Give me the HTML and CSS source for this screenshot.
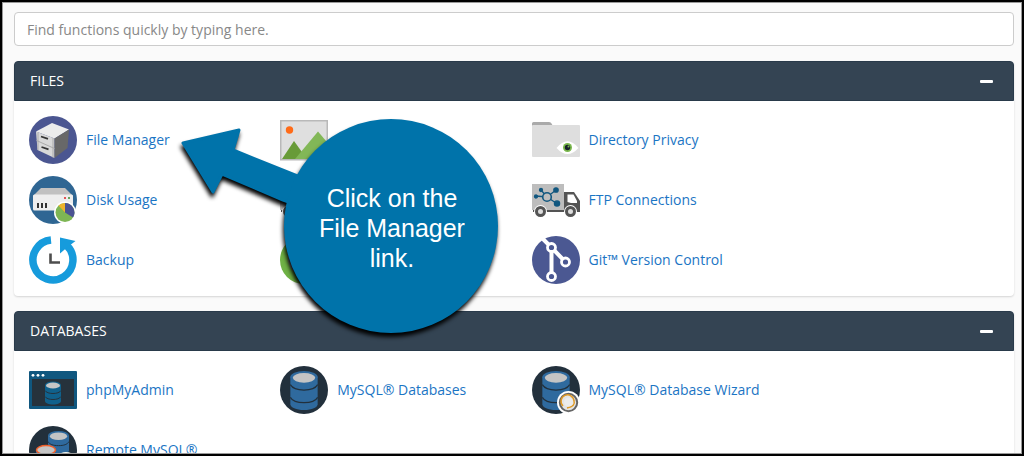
FILE: index.html
```
<!DOCTYPE html>
<html lang="en">
<head>
  <meta charset="UTF-8">
  <meta name="viewport" content="width=device-width, initial-scale=1.0">
  <title>Tools</title>
  <link rel="stylesheet" href="styles.css">
</head>
<body>
  <svg class="defs" aria-hidden="true">
    <defs>
      <symbol id="cylinder" viewBox="0 0 28 40">
        <path d="M0 6v28c0 3 6 6 14 6s14-3 14-6V6z" fill="#2f6a9e"/>
        <ellipse cx="14" cy="6" rx="14" ry="6" fill="#2f6a9e"/>
        <ellipse cx="14" cy="7" rx="11.5" ry="5" fill="#c4c4c4"/>
        <path d="M0 14c2 4 7 5.500 14 5.500S26 18 28 14M0 27c2 4 7 5.500 14 5.500S26 31 28 27" fill="none" stroke="#22303c" stroke-width="1.300"/>
      </symbol>
      <symbol id="truck" viewBox="0 0 48 48">
        <path d="M0 8h32v26H0z" fill="#bdbdbd"/>
        <path d="M32 16h10l6 9v11H32z" fill="#545454"/>
        <path d="M35.500 18.500h6l3.500 6.500v2h-6l-3.500-1z" fill="#fff"/>
        <path d="M1 34h46v2H1z" fill="#545454"/>
        <g stroke="#11577f" stroke-width="1.300" fill="#11577f">
          <path d="M15 21l-11-1M15 21l-6-7M15 21l9-7M15 21l9 6" fill="none"/>
          <circle cx="4" cy="20.5" r="1.5"/>
          <circle cx="9" cy="14" r="1.5"/>
          <circle cx="24" cy="14" r="2.2"/>
          <circle cx="25" cy="27.5" r="2.6"/>
          <circle cx="15" cy="21" r="4.3" fill="#bdbdbd" stroke-width="1.6"/>
        </g>
        <g fill="#ddd" stroke="#545454" stroke-width="3">
          <circle cx="8.5" cy="35.5" r="6.5" fill="#fff" stroke="none"/>
          <circle cx="38.5" cy="35.5" r="6.5" fill="#fff" stroke="none"/>
          <circle cx="8.5" cy="35.5" r="4"/>
          <circle cx="38.5" cy="35.5" r="4"/>
        </g>
      </symbol>
    </defs>
  </svg>

  <div class="frame">
    <main class="page">
      <input class="search" type="search" placeholder="Find functions quickly by typing here." aria-label="Find functions">

      <section class="panel">
        <div class="panel-header">
          <h2>FILES</h2>
          <button class="toggle" type="button" aria-label="Collapse files"><span></span></button>
        </div>
        <div class="items">
          <a class="item" href="#file-manager">
            <svg viewBox="0 0 48 48">
              <circle cx="24" cy="24" r="24" fill="#4b5691"/>
              <path d="M7 15.500L23 7l17 6.500-14.500 9z" fill="#ececec"/>
              <path d="M7 15.500l18.500 7V42L8.500 34z" fill="#d8d8d8"/>
              <path d="M25.500 22.500l14.500-9L38.500 32l-13 10z" fill="#686868"/>
              <path d="M7.500 24.500l18 8M24 22v19.500M9 16.500V34" fill="none" stroke="#aaa"/>
              <path d="M12 20.500l7 2.300M12.500 31l7 2.300" stroke="#333" stroke-width="1.800"/>
            </svg>
            <span>File Manager</span>
          </a>
          <a class="item" href="#images" aria-label="Images">
            <svg viewBox="0 0 48 48">
              <path d="M.75 4.750h46.500v39H.75z" fill="#dfdfdf" stroke="#b9b9b9" stroke-width="1.500"/>
              <circle cx="9.5" cy="14" r="3.7" fill="#ff6b18"/>
              <path d="M2 43l12-18 13 18z" fill="#689b38"/>
              <path d="M15 43l23-27.500 8.500 10V43z" fill="#82b757"/>
            </svg>
          </a>
          <a class="item" href="#directory-privacy">
            <svg viewBox="0 0 48 48">
              <path d="M0 10V7.500Q0 6 1.500 6H17q2 0 2.500 1.500L21 10z" fill="#aaa"/>
              <path d="M0 10q0-1 1-1h46q1 0 1 1v30q0 1-1 1H1q-1 0-1-1z" fill="#dedede"/>
              <path d="M24.500 32q11-13.500 22 0-11 12-22 0z" fill="#fff"/>
              <circle cx="35.5" cy="31.5" r="4.5" fill="#7ab84c"/>
              <circle cx="35.5" cy="31.5" r="2.7" fill="#17212b"/>
              <circle cx="36.5" cy="30.5" r="1" fill="#7ab84c"/>
            </svg>
            <span>Directory Privacy</span>
          </a>
          <a class="item" href="#disk-usage">
            <svg viewBox="0 0 48 48">
              <circle cx="24" cy="24" r="24" fill="#2f6693"/>
              <path d="M12 12h24l8 8H4z" fill="#c1c1c1"/>
              <path d="M4 20q0-1.500 1.500-1.500h37q1.500 0 1.500 1.500v13q0 1.500-1.500 1.500h-37Q4 34.500 4 33z" fill="#eee"/>
              <path d="M8 27h2v5H8zM12 27h2v5h-2zM16 27h2v5h-2z" fill="#333"/>
              <circle cx="36" cy="22" r="1" fill="#d22"/>
              <circle cx="40" cy="22" r="1" fill="#3a8b30"/>
              <circle cx="36" cy="36.5" r="11" fill="#fff"/>
              <circle cx="36" cy="36.5" r="9.5" fill="#7eb654"/>
              <path d="M36 36.500V27a9.500 9.500 0 0 1 8 14.500z" fill="#4a5292"/>
              <path d="M36 36.500l-6.500-7A9.500 9.500 0 0 1 36 27z" fill="#efb32b"/>
            </svg>
            <span>Disk Usage</span>
          </a>
          <a class="item" href="#ftp-accounts" aria-label="FTP Accounts">
            <svg><use href="#truck"/></svg>
          </a>
          <a class="item" href="#ftp-connections">
            <svg><use href="#truck"/></svg>
            <span>FTP Connections</span>
          </a>
          <a class="item" href="#backup">
            <svg viewBox="0 0 48 48">
              <path d="M22 4a20 20 0 1 0 15.500 5.200" fill="none" stroke="#169bdc" stroke-width="7.500"/>
              <path d="M31 1.500l15.500 3.500-8.500 6.500-7 6z" fill="#169bdc"/>
              <path d="M21.500 17.500v9H31" fill="none" stroke="#4d4d4d" stroke-width="2.600"/>
            </svg>
            <span>Backup</span>
          </a>
          <a class="item" href="#backup-wizard" aria-label="Backup Wizard">
            <svg viewBox="0 0 48 48">
              <circle cx="24" cy="24" r="24" fill="#6fb145"/>
              <circle cx="27" cy="22" r="18" fill="#e6e6e6" stroke="#888" stroke-width="2"/>
            </svg>
          </a>
          <a class="item" href="#git">
            <svg viewBox="0 0 48 48">
              <circle cx="24" cy="24" r="24" fill="#4b5892"/>
              <g fill="none" stroke="#fff">
                <path d="M10.500 2.500l9 9 14 14.500M19.500 11.500v29" stroke-width="4"/>
                <g fill="#4b5892" stroke-width="2.800">
                  <circle cx="19.5" cy="11.5" r="4"/>
                  <circle cx="33.5" cy="26" r="4"/>
                  <circle cx="19.5" cy="40.5" r="4"/>
                </g>
              </g>
            </svg>
            <span>Git™ Version Control</span>
          </a>
        </div>
      </section>

      <section class="panel">
        <div class="panel-header">
          <h2>DATABASES</h2>
          <button class="toggle" type="button" aria-label="Collapse databases"><span></span></button>
        </div>
        <div class="items">
          <a class="item" href="#phpmyadmin">
            <svg viewBox="0 0 48 48">
              <rect y="5" width="48" height="38" rx="1" fill="#10577f"/>
              <path d="M3 13h42v27H3z" fill="#26323c"/>
              <g fill="#fff">
                <circle cx="4" cy="9.3" r="1.4"/>
                <circle cx="9" cy="9.3" r="1.4"/>
                <circle cx="14" cy="9.3" r="1.4"/>
              </g>
              <path d="M16 19v16c0 2 3.500 3.500 8 3.500s8-1.500 8-3.500V19z" fill="#10618c"/>
              <ellipse cx="24" cy="19" rx="8" ry="3.5" fill="#10618c"/>
              <ellipse cx="24" cy="19.5" rx="7" ry="3" fill="#c6c6c6"/>
              <path d="M16 24.500c2 4 14 4 16 0M16 30.500c2 4 14 4 16 0" fill="none" stroke="#26323c"/>
            </svg>
            <span>phpMyAdmin</span>
          </a>
          <a class="item" href="#mysql-databases">
            <svg viewBox="0 0 48 48">
              <circle cx="24" cy="24" r="24" fill="#22303c"/>
              <use href="#cylinder" x="10" y="5" width="28" height="39"/>
            </svg>
            <span>MySQL® Databases</span>
          </a>
          <a class="item" href="#mysql-wizard">
            <svg viewBox="0 0 48 48">
              <circle cx="24" cy="24" r="24" fill="#22303c"/>
              <use href="#cylinder" x="10" y="5" width="28" height="39"/>
              <circle cx="36.5" cy="36.5" r="11.5" fill="#fff"/>
              <circle cx="36.5" cy="36.5" r="8.7" fill="#e4e4e4" stroke="#666" stroke-width="2"/>
              <path d="M31 40a6.500 6.500 0 1 1 11-5q2 5-7 7" fill="none" stroke="#e09a25" stroke-width="1.500"/>
              <circle cx="36.5" cy="36" r="4.5" fill="#ececec"/>
            </svg>
            <span>MySQL® Database Wizard</span>
          </a>
          <a class="item" href="#remote-mysql">
            <svg viewBox="0 0 48 48">
              <circle cx="24" cy="24" r="24" fill="#22303c"/>
              <use href="#cylinder" x="19" y="5" width="21" height="30"/>
              <path d="M7 24v16h20V24z" fill="#2f6a9e"/>
              <ellipse cx="17" cy="24" rx="9.5" ry="4.5" fill="#c6c6c6" stroke="#f0602b" stroke-width="1.5"/>
              <ellipse cx="37" cy="31" rx="8" ry="5" fill="#f3f6ec"/>
            </svg>
            <span>Remote MySQL®</span>
          </a>
        </div>
      </section>
    </main>
  </div>

  <div class="callout">
    <svg viewBox="180 115 320 226" aria-hidden="true">
      <path d="M183 143L239 130 233 150 300 177 300 206 283 200 222 174 213 192z" stroke="#0073aa" stroke-width="3" stroke-linejoin="round"/>
      <circle cx="391" cy="226" r="107"/>
    </svg>
    <p>Click on the<br>File Manager<br>link.</p>
  </div>
</body>
</html>
```
FILE: styles.css
```
* {
  box-sizing: border-box;
}
body {
  margin: 0;
  font-family: 'Open Sans', Arial, Helvetica, sans-serif;
  font-size: 14px;
  line-height: 20px;
}
.defs {
  position: absolute;
  width: 0;
  height: 0;
}
.frame {
  height: 100vh;
  border: 2px solid #000;
  overflow: hidden;
}
.page {
  height: 100%;
  padding: 9px 7px 0 11px;
  border: 1px solid #999;
  background: #fafafa;
  overflow: hidden;
}
.search {
  display: block;
  width: 100%;
  height: 34px;
  padding: 0 12px;
  border: 1px solid #ccc;
  border-radius: 4px;
  background: #fff;
  font: inherit;
  appearance: none;
}
.search::placeholder {
  color: #888;
  opacity: 1;
}
.panel {
  margin-top: 15px;
  border-radius: 4px;
  background: #fff;
  box-shadow: 0 1px 2px rgba(0, 0, 0, 0.15);
}
.panel-header {
  display: flex;
  align-items: center;
  justify-content: space-between;
  height: 40px;
  padding: 0 15px;
  border: 1px solid #293a4a;
  border-radius: 4px 4px 0 0;
  background: #344453;
  color: #fff;
}
h2 {
  margin: 0;
  font-size: 14px;
  font-weight: 400;
}
.toggle {
  padding: 8px 5px;
  border: 0;
  background: none;
}
.toggle span {
  display: block;
  width: 13px;
  height: 3px;
  border-radius: 1px;
  background: #fff;
}
.items {
  display: grid;
  grid-template-columns: repeat(4, minmax(0, 1fr));
  column-gap: 20px;
  padding: 9px 0 6px 15px;
}
.item {
  display: flex;
  align-items: center;
  gap: 9px;
  height: 60px;
  color: #1b75c4;
  text-decoration: none;
}
.item svg {
  flex: none;
  width: 48px;
  height: 48px;
}
.item:nth-child(3n + 1) {
  grid-column: 1;
}
.callout {
  position: absolute;
  top: 115px;
  left: 180px;
  display: grid;
  align-items: center;
  width: 320px;
  height: 226px;
  color: #fff;
  font: 25px/30px 'Liberation Sans', Arial, sans-serif;
  text-align: center;
}
.callout svg,
.callout p {
  grid-area: 1 / 1;
}
.callout svg {
  width: 320px;
  height: 226px;
  overflow: visible;
  fill: #0073aa;
  filter: drop-shadow(-1px 4px 2px #000);
}
.callout p {
  z-index: 1;
  justify-self: end;
  width: 216px;
  margin: 0;
}
```
